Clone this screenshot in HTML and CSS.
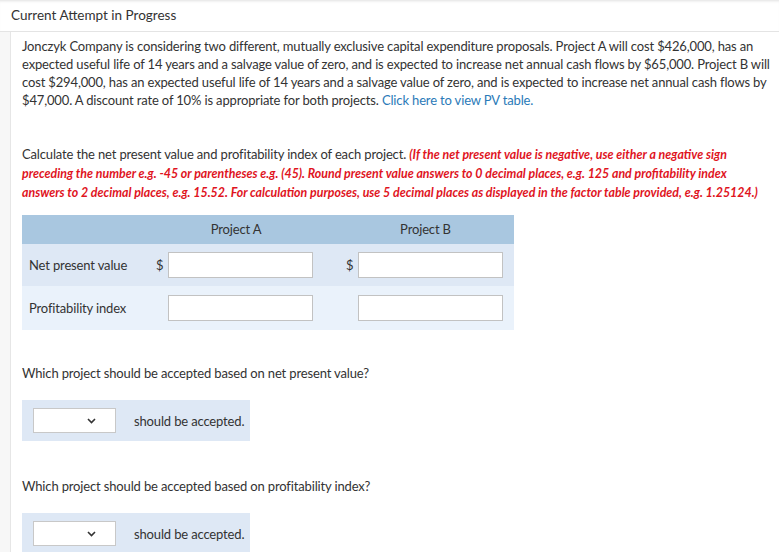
FILE: index.html
```html
<!DOCTYPE html>
<html lang="en">
<head>
<meta charset="utf-8">
<title>Current Attempt in Progress</title>
<link rel="stylesheet" href="styles.css">
</head>
<body>
<div class="header">Current Attempt in Progress</div>
<div class="main">
  <div class="content">
    <p class="intro">Jonczyk Company is considering two different, mutually exclusive capital expenditure proposals. Project A will cost $426,000, has an expected useful life of 14 years and a salvage value of zero, and is expected to increase net annual cash flows by $65,000. Project B will cost $294,000, has an expected useful life of 14 years and a salvage value of zero, and is expected to increase net annual cash flows by $47,000. A discount rate of 10% is appropriate for both projects. <a class="link" href="#">Click here to view PV table.</a></p>

    <p class="instr">Calculate the net present value and profitability index of each project. <span class="red">(If the net present value is negative, use either a negative sign preceding the number e.g. -45 or parentheses e.g. (45). Round present value answers to 0 decimal places, e.g. 125 and profitability index answers to 2 decimal places, e.g. 15.52. For calculation purposes, use 5 decimal places as displayed in the factor table provided, e.g. 1.25124.)</span></p>

    <div class="table">
      <div class="th th-label"></div>
      <div class="th th-a">Project A</div>
      <div class="th th-b">Project B</div>

      <div class="td td-label row1">Net present value</div>
      <div class="td row1 cell-a"><span class="cur">$</span><input class="field" type="text"></div>
      <div class="td row1 cell-b"><span class="cur">$</span><input class="field" type="text"></div>

      <div class="td td-label row2">Profitability index</div>
      <div class="td row2 cell-a"><span class="cur"></span><input class="field" type="text"></div>
      <div class="td row2 cell-b"><span class="cur"></span><input class="field" type="text"></div>
    </div>

    <p class="question q1">Which project should be accepted based on net present value?</p>
    <div class="answer">
      <span class="select-wrap">
        <select class="select"><option></option><option>Project A</option><option>Project B</option></select>
        <svg class="chev" width="9" height="6" viewBox="0 0 9 6"><path d="M1 1 L4.5 4.5 L8 1" fill="none" stroke="#333" stroke-width="1.6"/></svg>
      </span>
      <span class="answer-text">should be accepted.</span>
    </div>

    <p class="question q2">Which project should be accepted based on profitability index?</p>
    <div class="answer">
      <span class="select-wrap">
        <select class="select"><option></option><option>Project A</option><option>Project B</option></select>
        <svg class="chev" width="9" height="6" viewBox="0 0 9 6"><path d="M1 1 L4.5 4.5 L8 1" fill="none" stroke="#333" stroke-width="1.6"/></svg>
      </span>
      <span class="answer-text">should be accepted.</span>
    </div>
  </div>
</div>
</body>
</html>
```
FILE: styles.css
```css
html, body {
  margin: 0;
  padding: 0;
  background: #ffffff;
}
body {
  font-family: Lato, "Open Sans", sans-serif;
  font-size: 13px;
  letter-spacing: -0.15px;
  color: #333333;
  width: 779px;
  height: 552px;
  overflow: hidden;
}
.header {
  height: 31px;
  box-sizing: border-box;
  padding: 7px 0 0 11px;
  font-size: 13.5px;
  letter-spacing: 0;
  line-height: 17px;
  color: #333;
  box-shadow: inset 0 3px 3px -2px rgba(0,0,0,0.12);
  background: #fff;
}
.main {
  background: #f7f7f7;
  padding-left: 10px;
  border-top: 1px solid #e4e4e4;
}
.content {
  background: #ffffff;
  border-left: 1px solid #e6e6e6;
  padding: 5px 0 0 11px;
  height: 520px;
  overflow: hidden;
}
p {
  margin: 0;
  line-height: 18px;
}
.intro {
  width: 752px;
}
.link {
  color: #2a7ab8;
  text-decoration: none;
}
.instr {
  margin-top: 36px;
  width: 748px;
}
.red {
  color: #e0141e;
  font-weight: bold;
  font-style: italic;
  font-size: 12.4px;
  letter-spacing: 0;
  line-height: 18px;
}
.table {
  margin-top: 13px;
  display: grid;
  grid-template-columns: 125px 190px 177px;
  width: 492px;
}
.th {
  background: #a9c7e0;
  height: 29px;
  line-height: 29px;
  text-align: center;
  color: #333;
}
.th-a {
  padding-right: 12px;
}
.td {
  display: flex;
  align-items: center;
}
.row1 {
  background: #dee8f5;
  height: 42px;
}
.row2 {
  background: #eaf2fb;
  height: 44px;
}
.td-label {
  padding-left: 7px;
}
.cur {
  width: 21px;
  box-sizing: border-box;
  padding-left: 9px;
}
.field {
  width: 145px;
  height: 26px;
  box-sizing: border-box;
  border: 1px solid #c2c2c2;
  background: #fff;
  margin: 0;
  padding: 2px 4px;
  font-family: inherit;
  font-size: 13px;
}
.question {
  margin-top: 34px;
}
.question.q2 {
  margin-top: 36px;
}
.answer {
  margin-top: 18px;
  width: 228px;
  height: 41px;
  background: #dee8f5;
  display: flex;
  align-items: center;
  box-sizing: border-box;
  padding-left: 11px;
}
.select-wrap {
  position: relative;
  display: inline-block;
  width: 83px;
  height: 25px;
}
.select {
  appearance: none;
  -webkit-appearance: none;
  width: 83px;
  height: 25px;
  box-sizing: border-box;
  border: 1px solid #c8c8c8;
  background: #fff;
  margin: 0;
  font-family: inherit;
  font-size: 13px;
}
.chev {
  position: absolute;
  right: 20px;
  top: 10px;
  pointer-events: none;
}
.answer-text {
  margin-left: 18px;
}
```
